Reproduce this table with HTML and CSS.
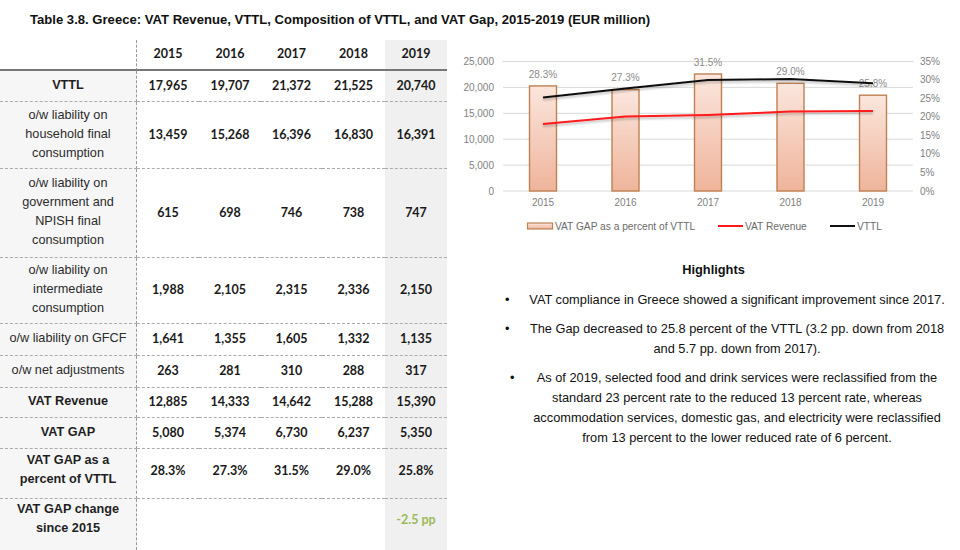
FILE: index.html
```html
<!DOCTYPE html>
<html lang="en">
<head>
<meta charset="utf-8">
<title>Greece VAT Gap</title>
<link rel="stylesheet" href="styles.css">
</head>
<body>
<h1 class="title">Table 3.8. Greece: VAT Revenue, VTTL, Composition of VTTL, and VAT Gap, 2015-2019 (EUR million)</h1>
<div class="main">
  <div class="vat-table">
    <div class="cell label head"></div>
    <div class="cell num head">2015</div>
    <div class="cell num head">2016</div>
    <div class="cell num head">2017</div>
    <div class="cell num head">2018</div>
    <div class="cell num head last">2019</div>

    <div class="cell label bold">VTTL</div>
    <div class="cell num">17,965</div>
    <div class="cell num">19,707</div>
    <div class="cell num">21,372</div>
    <div class="cell num">21,525</div>
    <div class="cell num last">20,740</div>

    <div class="cell label">o/w liability on household final consumption</div>
    <div class="cell num">13,459</div>
    <div class="cell num">15,268</div>
    <div class="cell num">16,396</div>
    <div class="cell num">16,830</div>
    <div class="cell num last">16,391</div>

    <div class="cell label">o/w liability on government and NPISH final consumption</div>
    <div class="cell num">615</div>
    <div class="cell num">698</div>
    <div class="cell num">746</div>
    <div class="cell num">738</div>
    <div class="cell num last">747</div>

    <div class="cell label">o/w liability on intermediate consumption</div>
    <div class="cell num">1,988</div>
    <div class="cell num">2,105</div>
    <div class="cell num">2,315</div>
    <div class="cell num">2,336</div>
    <div class="cell num last">2,150</div>

    <div class="cell label">o/w liability on GFCF</div>
    <div class="cell num">1,641</div>
    <div class="cell num">1,355</div>
    <div class="cell num">1,605</div>
    <div class="cell num">1,332</div>
    <div class="cell num last">1,135</div>

    <div class="cell label">o/w net adjustments</div>
    <div class="cell num">263</div>
    <div class="cell num">281</div>
    <div class="cell num">310</div>
    <div class="cell num">288</div>
    <div class="cell num last">317</div>

    <div class="cell label bold">VAT Revenue</div>
    <div class="cell num">12,885</div>
    <div class="cell num">14,333</div>
    <div class="cell num">14,642</div>
    <div class="cell num">15,288</div>
    <div class="cell num last">15,390</div>

    <div class="cell label bold">VAT GAP</div>
    <div class="cell num">5,080</div>
    <div class="cell num">5,374</div>
    <div class="cell num">6,730</div>
    <div class="cell num">6,237</div>
    <div class="cell num last">5,350</div>

    <div class="cell label bold pct">VAT GAP as a percent of VTTL</div>
    <div class="cell num pct">28.3%</div>
    <div class="cell num pct">27.3%</div>
    <div class="cell num pct">31.5%</div>
    <div class="cell num pct">29.0%</div>
    <div class="cell num last pct">25.8%</div>

    <div class="cell label bold end">VAT GAP change since 2015</div>
    <div class="cell num end"></div>
    <div class="cell num end"></div>
    <div class="cell num end"></div>
    <div class="cell num end"></div>
    <div class="cell num last end green">-2.5 pp</div>
  </div>

  <div class="side">
    <svg class="chart" width="513" height="200" viewBox="447 40 513 200" xmlns="http://www.w3.org/2000/svg">
      <defs>
        <linearGradient id="barg" x1="0" y1="0" x2="0" y2="1">
          <stop offset="0" stop-color="#fbe6dd"/>
          <stop offset="1" stop-color="#efb49b"/>
        </linearGradient>
        <filter id="shadow" x="-5%" y="-50%" width="110%" height="200%">
          <feDropShadow dx="0" dy="2" stdDeviation="1.2" flood-color="#000" flood-opacity="0.25"/>
        </filter>
      </defs>
      <g class="grid">
        <line x1="503" y1="61.5" x2="913" y2="61.5"/>
        <line x1="503" y1="87.4" x2="913" y2="87.4"/>
        <line x1="503" y1="113.3" x2="913" y2="113.3"/>
        <line x1="503" y1="139.2" x2="913" y2="139.2"/>
        <line x1="503" y1="165.1" x2="913" y2="165.1"/>
        <line x1="503" y1="191" x2="913" y2="191"/>
      </g>
      <g class="axis-left">
        <text x="494" y="65">25,000</text>
        <text x="494" y="91">20,000</text>
        <text x="494" y="116.5">15,000</text>
        <text x="494" y="142.5">10,000</text>
        <text x="494" y="168.5">5,000</text>
        <text x="494" y="194.5">0</text>
      </g>
      <g class="axis-right">
        <text x="920" y="65">35%</text>
        <text x="920" y="83.4">30%</text>
        <text x="920" y="101.9">25%</text>
        <text x="920" y="120.4">20%</text>
        <text x="920" y="138.8">15%</text>
        <text x="920" y="157.3">10%</text>
        <text x="920" y="175.8">5%</text>
        <text x="920" y="194.5">0%</text>
      </g>
      <g class="bars">
        <rect x="529.5" y="85.9" width="27" height="105.1"/>
        <rect x="612" y="89.6" width="27" height="101.4"/>
        <rect x="694.5" y="74" width="27" height="117"/>
        <rect x="777" y="83.3" width="27" height="107.7"/>
        <rect x="859.5" y="95.2" width="27" height="95.8"/>
      </g>
      <g class="bar-labels">
        <text x="543" y="77.5">28.3%</text>
        <text x="625.5" y="81">27.3%</text>
        <text x="708" y="65.5">31.5%</text>
        <text x="790.5" y="75">29.0%</text>
        <text x="873" y="87">25.8%</text>
      </g>
      <polyline class="line-red" points="543,124 625.5,116.5 708,114.9 790.5,111.5 873,111"/>
      <polyline class="line-black" points="543,97.6 625.5,88.5 708,79.9 790.5,79.1 873,83.2"/>
      <g class="axis-x">
        <text x="543" y="205.5">2015</text>
        <text x="625.5" y="205.5">2016</text>
        <text x="708" y="205.5">2017</text>
        <text x="790.5" y="205.5">2018</text>
        <text x="873" y="205.5">2019</text>
      </g>
      <g class="legend">
        <rect class="swatch" x="527.5" y="223" width="25" height="6"/>
        <text x="555" y="229.5">VAT GAP as a percent of VTTL</text>
        <line class="lg-red" x1="718" y1="226" x2="743" y2="226"/>
        <text x="745" y="229.5">VAT Revenue</text>
        <line class="lg-black" x1="830" y1="226" x2="855" y2="226"/>
        <text x="857" y="229.5">VTTL</text>
      </g>
    </svg>

    <section class="highlights">
      <h2 class="hl-title">Highlights</h2>
      <ul class="hl-list">
        <li class="hl-item"><span class="dot">•</span><span class="hl-text">VAT compliance in Greece showed a significant improvement since 2017.</span></li>
        <li class="hl-item"><span class="dot">•</span><span class="hl-text">The Gap decreased to 25.8 percent of the VTTL (3.2 pp. down from 2018 and 5.7 pp. down from 2017).</span></li>
        <li class="hl-item shifted"><span class="dot">•</span><span class="hl-text">As of 2019, selected food and drink services were reclassified from the standard 23 percent rate to the reduced 13 percent rate, whereas accommodation services, domestic gas, and electricity were reclassified from 13 percent to the lower reduced rate of 6 percent.</span></li>
      </ul>
    </section>
  </div>
</div>
</body>
</html>
```
FILE: styles.css
```css
* { box-sizing: border-box; }

html, body {
  margin: 0;
  padding: 0;
  background: #ffffff;
}

body {
  width: 960px;
  height: 550px;
  overflow: hidden;
  font-family: "Liberation Sans", Arial, sans-serif;
  color: #1a1a1a;
}

.title {
  margin: 0;
  height: 40px;
  line-height: 40px;
  padding-left: 30px;
  font-size: 13.1px;
  font-weight: bold;
  color: #111;
}

.main {
  display: flex;
  align-items: flex-start;
}

/* ---------- table ---------- */
.vat-table {
  width: 447px;
  flex: none;
  display: grid;
  grid-template-columns: 137px 62px 62px 61px 63px 62px;
  grid-template-rows: 31px 31px 67px 89px 66px 32px 32px 30px 31px 50px 51px;
}

.cell {
  display: flex;
  align-items: center;
  justify-content: center;
  text-align: center;
  padding-bottom: 2px;
  border-bottom: 1px dashed #ababab;
}

.cell.head {
  border-bottom: 2px solid #777777;
  padding-bottom: 3px;
}

.cell.pct {
  padding-bottom: 7px;
}

.cell.end {
  border-bottom: none;
  padding-bottom: 11px;
}

.label {
  padding-left: 5px;
  padding-right: 5px;
  font-family: "Liberation Sans", Arial, sans-serif;
  font-size: 12.7px;
  line-height: 19px;
  color: #2b2b2b;
  background: #f6f6f6;
  border-right: 1px dashed #9a9a9a;
}

.label.head {
  background: #ffffff;
}

.label.bold {
  font-weight: bold;
  color: #1f1f1f;
}

.num {
  font-family: Lato, "Open Sans", sans-serif;
  font-weight: bold;
  font-size: 12.5px;
  color: #1a1a1a;
}

.num.last {
  background: #f0f0f0;
}

.green {
  color: #9bbb59;
}

/* ---------- chart ---------- */
.side {
  width: 513px;
  flex: none;
  display: flex;
  flex-direction: column;
}

.chart {
  display: block;
  font-family: "Liberation Sans", Arial, sans-serif;
}

.grid line {
  stroke: #d9d9d9;
  stroke-width: 1;
}

.axis-left text {
  font-size: 10px;
  fill: #7f7f7f;
  text-anchor: end;
}

.axis-right text {
  font-size: 10px;
  fill: #7f7f7f;
  text-anchor: start;
}

.axis-x text {
  font-size: 10px;
  fill: #7f7f7f;
  text-anchor: middle;
}

.bars rect {
  fill: url(#barg);
  stroke: #bf8152;
  stroke-width: 1.4;
}

.bar-labels text {
  font-size: 10px;
  fill: #8a8a8a;
  text-anchor: middle;
}

.line-red {
  fill: none;
  stroke: #ff1a1a;
  stroke-width: 2;
  filter: url(#shadow);
}

.line-black {
  fill: none;
  stroke: #111111;
  stroke-width: 2;
  filter: url(#shadow);
}

.legend text {
  font-size: 10.2px;
  fill: #6a6a6a;
}

.legend .swatch {
  fill: url(#barg);
  stroke: #bf8152;
  stroke-width: 1.2;
}

.lg-red {
  stroke: #ff1a1a;
  stroke-width: 2;
}

.lg-black {
  stroke: #111111;
  stroke-width: 2;
}

/* ---------- highlights ---------- */
.highlights {
  padding-left: 20px;
  margin-top: 20px;
}

.hl-title {
  margin: 0;
  font-size: 12.8px;
  line-height: 20px;
  font-weight: bold;
  text-align: center;
  color: #111;
}

.hl-list {
  list-style: none;
  margin: 10px 0 0 0;
  padding: 0;
  display: flex;
  flex-direction: column;
  gap: 9px;
}

.hl-item {
  display: flex;
  font-size: 12.8px;
  line-height: 20px;
  color: #111;
}

.dot {
  width: 60px;
  flex: none;
  padding-left: 38px;
}

.hl-item.shifted .dot {
  padding-left: 43px;
}

.hl-text {
  width: 420px;
  text-align: center;
}
```
